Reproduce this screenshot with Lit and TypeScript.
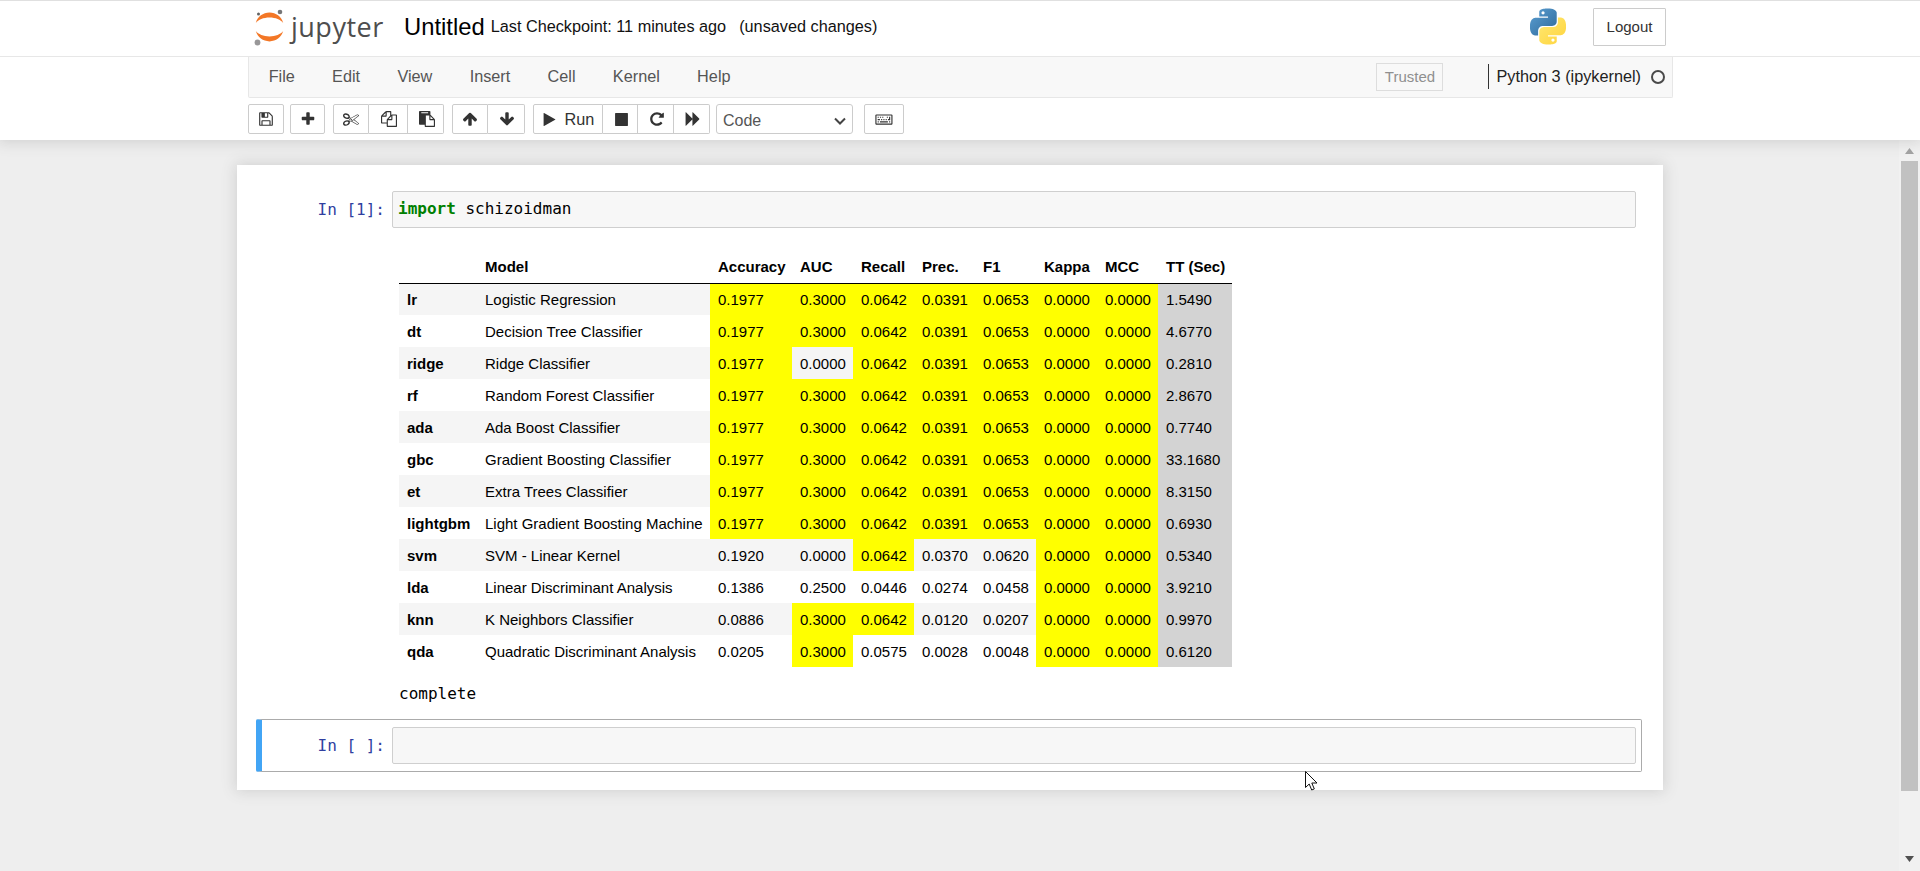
import { LitElement, html, css, svg } from "lit";
import { customElement } from "lit/decorators.js";

const P: Record<string, string> = {
  save: "M512 1536h768v-384h-768v384zm896 0h128v-896q0-14-10-38.5t-20-34.5l-281-281q-10-10-34-20t-39-10v416q0 40-28 68t-68 28h-576q-40 0-68-28t-28-68v-416h-128v1280h128v-416q0-40 28-68t68-28h832q40 0 68 28t28 68v416zm-384-928v-320q0-13-9.5-22.5t-22.5-9.5h-192q-13 0-22.5 9.5t-9.5 22.5v320q0 13 9.5 22.5t22.5 9.5h192q13 0 22.5-9.5t9.5-22.5zm640 32v928q0 40-28 68t-68 28h-1344q-40 0-68-28t-28-68v-1344q0-40 28-68t68-28h928q40 0 88 20t76 48l280 280q28 28 48 76t20 88z",
  plus: "M1600 736v192q0 40-28 68t-68 28h-416v416q0 40-28 68t-68 28h-192q-40 0-68-28t-28-68v-416h-416q-40 0-68-28t-28-68v-192q0-40 28-68t68-28h416v-416q0-40 28-68t68-28h192q40 0 68 28t28 68v416h416q40 0 68 28t28 68z",
  cut: "M960 896q26 0 45 19t19 45-19 45-45 19-45-19-19-45 19-45 45-19zm300 64l507 398q28 20 25 56-5 35-35 51l-128 64q-13 7-29 7-17 0-31-8l-690-387-110 66q-8 4-12 5 14 49 10 97-7 77-56 147.5t-132 123.5q-132 84-277 84-136 0-222-78-90-84-79-207 7-76 56-147t131-124q132-84 278-84 83 0 151 31 9-13 22-22l122-73-122-73q-13-9-22-22-68 31-151 31-146 0-278-84-82-53-131-124t-56-147q-5-59 15.5-113t63.5-93q85-79 222-79 145 0 277 84 83 52 132 123t56 148q4 48-10 97 4 1 12 5l110 66 690-387q14-8 31-8 16 0 29 7l128 64q30 16 35 51 3 36-25 56zm-681-260q46-42 21-108t-106-117q-92-59-192-59-74 0-113 36-46 42-21 108t106 117q92 59 192 59 74 0 113-36zm-85 745q81-51 106-117t-21-108q-39-36-113-36-100 0-192 59-81 51-106 117t21 108q39 36 113 36 100 0 192-59zm178-613l96 58v-11q0-36 33-56l14-8-79-47-26 26q-3 3-10 11t-12 12q-2 2-4 3.5t-3 2.5zm224 224l96 32 736-576-128-64-768 431v113l-160 96 9 8q2 2 7 6 4 4 11 12t11 12l26 26zm704 416l128-64-520-408-177 138q-2 3-13 7z",
  copy: "M1696 384q40 0 68 28t28 68v1216q0 40-28 68t-68 28h-960q-40 0-68-28t-28-68v-288h-544q-40 0-68-28t-28-68v-672q0-40 20-88t48-76l408-408q28-28 76-48t88-20h416q40 0 68 28t28 68v328q68-40 128-40h416zm-544 213l-299 299h299v-299zm-640-384l-299 299h299v-299zm196 647l316-316v-416h-384v416q0 40-28 68t-68 28h-416v640h512v-256q0-40 20-88t48-76zm956 804v-1152h-384v416q0 40-28 68t-68 28h-416v640h896z",
  paste: "M768 1664h896v-640h-416q-40 0-68-28t-28-68v-416h-384v1152zm256-1440v-64q0-13-9.5-22.5t-22.5-9.5h-704q-13 0-22.5 9.5t-9.5 22.5v64q0 13 9.5 22.5t22.5 9.5h704q13 0 22.5-9.5t9.5-22.5zm256 672h299l-299-299v299zm512 128v672q0 40-28 68t-68 28h-960q-40 0-68-28t-28-68v-160h-544q-40 0-68-28t-28-68v-1344q0-40 28-68t68-28h1088q40 0 68 28t28 68v328q21 13 36 28l408 408q28 28 48 76t20 88z",
  up: "M1675 971q0 51-37 90l-75 75q-38 38-91 38-54 0-90-38l-294-293v704q0 52-37.5 84.5t-90.5 32.5h-128q-53 0-90.5-32.5t-37.5-84.5v-704l-294 293q-36 38-90 38t-90-38l-75-75q-38-38-38-90 0-53 38-91l651-651q35-37 90-37 54 0 91 37l651 651q37 39 37 91z",
  down: "M1675 832q0 53-37 90l-651 652q-39 37-91 37-53 0-90-37l-651-652q-38-36-38-90 0-53 38-91l74-75q39-37 91-37 53 0 90 37l294 294v-704q0-52 38-90t90-38h128q52 0 90 38t38 90v704l294-294q37-37 90-37 52 0 91 37l75 75q37 39 37 91z",
  play: "M1576 927l-1328 738q-23 13-39.5 3t-16.5-36v-1472q0-26 16.5-36t39.5 3l1328 738q23 13 23 31t-23 31z",
  stop: "M1664 192v1408q0 26-19 45t-45 19h-1408q-26 0-45-19t-19-45v-1408q0-26 19-45t45-19h1408q26 0 45 19t19 45z",
  redo: "M1664 256v448q0 26-19 45t-45 19h-448q-42 0-59-40-17-39 14-69l138-138q-148-137-349-137-104 0-198.5 40.5t-163.5 109.5-109.5 163.5-40.5 198.5 40.5 198.5 109.5 163.5 163.5 109.5 198.5 40.5q119 0 225-52t179-147q7-10 23-12 15 0 25 9l137 138q9 8 9.5 20.5t-7.5 22.5q-109 132-264 204.5t-327 72.5q-156 0-298-61t-245-164-164-245-61-298 61-298 164-245 245-164 298-61q147 0 284.5 55.5t244.5 156.5l130-129q29-31 70-14 39 17 39 59z",
  ff: "M109 1651q-19 19-32 13t-13-32v-1472q0-26 13-32t32 13l710 710q9 9 13 19v-710q0-26 13-32t32 13l710 710q19 19 19 45t-19 45l-710 710q-19 19-32 13t-13-32v-710q-4 10-13 19z",
  kb: "M384 1168v96q0 16-16 16h-96q-16 0-16-16v-96q0-16 16-16h96q16 0 16 16zm128-256v96q0 16-16 16h-224q-16 0-16-16v-96q0-16 16-16h224q16 0 16 16zm-128-256v96q0 16-16 16h-96q-16 0-16-16v-96q0-16 16-16h96q16 0 16 16zm1024 512v96q0 16-16 16h-864q-16 0-16-16v-96q0-16 16-16h864q16 0 16 16zm-640-256v96q0 16-16 16h-96q-16 0-16-16v-96q0-16 16-16h96q16 0 16 16zm-128-256v96q0 16-16 16h-96q-16 0-16-16v-96q0-16 16-16h96q16 0 16 16zm384 256v96q0 16-16 16h-96q-16 0-16-16v-96q0-16 16-16h96q16 0 16 16zm-128-256v96q0 16-16 16h-96q-16 0-16-16v-96q0-16 16-16h96q16 0 16 16zm384 256v96q0 16-16 16h-96q-16 0-16-16v-96q0-16 16-16h96q16 0 16 16zm384 256v96q0 16-16 16h-96q-16 0-16-16v-96q0-16 16-16h96q16 0 16 16zm-256-512v96q0 16-16 16h-96q-16 0-16-16v-96q0-16 16-16h96q16 0 16 16zm256 0v352q0 16-16 16h-224q-16 0-16-16v-96q0-16 16-16h112v-240q0-16 16-16h96q16 0 16 16zm128 752v-896h-1664v896h1664zm128-896v896q0 53-37.5 90.5t-90.5 37.5h-1664q-53 0-90.5-37.5t-37.5-90.5v-896q0-53 37.5-90.5t90.5-37.5h1664q53 0 90.5 37.5t37.5 90.5z",
};

const ic = (n: string, vb = "0 0 1792 1792") =>
  html`<svg class="ic ic-${n}" viewBox=${vb} aria-hidden="true">${svg`<path fill="currentColor" d=${P[n]}></path>`}</svg>`;

type Row = [string, string, string, string, string, string, string, string, string, string];
const rows: Row[] = [
  ["lr", "Logistic Regression", "0.1977", "0.3000", "0.0642", "0.0391", "0.0653", "0.0000", "0.0000", "1.5490"],
  ["dt", "Decision Tree Classifier", "0.1977", "0.3000", "0.0642", "0.0391", "0.0653", "0.0000", "0.0000", "4.6770"],
  ["ridge", "Ridge Classifier", "0.1977", "0.0000", "0.0642", "0.0391", "0.0653", "0.0000", "0.0000", "0.2810"],
  ["rf", "Random Forest Classifier", "0.1977", "0.3000", "0.0642", "0.0391", "0.0653", "0.0000", "0.0000", "2.8670"],
  ["ada", "Ada Boost Classifier", "0.1977", "0.3000", "0.0642", "0.0391", "0.0653", "0.0000", "0.0000", "0.7740"],
  ["gbc", "Gradient Boosting Classifier", "0.1977", "0.3000", "0.0642", "0.0391", "0.0653", "0.0000", "0.0000", "33.1680"],
  ["et", "Extra Trees Classifier", "0.1977", "0.3000", "0.0642", "0.0391", "0.0653", "0.0000", "0.0000", "8.3150"],
  ["lightgbm", "Light Gradient Boosting Machine", "0.1977", "0.3000", "0.0642", "0.0391", "0.0653", "0.0000", "0.0000", "0.6930"],
  ["svm", "SVM - Linear Kernel", "0.1920", "0.0000", "0.0642", "0.0370", "0.0620", "0.0000", "0.0000", "0.5340"],
  ["lda", "Linear Discriminant Analysis", "0.1386", "0.2500", "0.0446", "0.0274", "0.0458", "0.0000", "0.0000", "3.9210"],
  ["knn", "K Neighbors Classifier", "0.0886", "0.3000", "0.0642", "0.0120", "0.0207", "0.0000", "0.0000", "0.9970"],
  ["qda", "Quadratic Discriminant Analysis", "0.0205", "0.3000", "0.0575", "0.0028", "0.0048", "0.0000", "0.0000", "0.6120"],
];
const heads = ["", "Model", "Accuracy", "AUC", "Recall", "Prec.", "F1", "Kappa", "MCC", "TT (Sec)"];
const best = ["", "", "0.1977", "0.3000", "0.0642", "0.0391", "0.0653", "0.0000", ""];

@customElement("app-root")
export class AppRoot extends LitElement {
  static styles = css`
    :host { display: flex; flex-direction: column; height: 871px; overflow: hidden; background: #eee; font-family: "Liberation Sans", Arial, sans-serif; color: #000; position: relative; }
    * { box-sizing: border-box; }
    header { height: 140px; flex: none; background: #fff; border-top: 1px solid #e0e0e0; box-shadow: 0 0 14px 2px rgba(87,87,87,.2); position: relative; z-index: 2; }
    .top { height: 56px; border-bottom: 1px solid #e7e7e7; display: flex; align-items: center; padding: 0 0 4px 253px; }
    .logo { width: 33px; height: 40px; flex: none; margin-top: 3px; }
    .jup { font-family: "Open Sans", sans-serif; font-size: 27px; color: #4e4e4e; margin-left: 5px; width: 113px; letter-spacing: .5px; line-height: 40px; }
    .title { font-size: 23.8px; margin-right: 6px; }
    .ck { font-size: 16.25px; color: #111; }
    .unsaved { margin-left: 13px; }
    .py { width: 36px; height: 37px; margin-left: auto; flex: none; }
    .logout { width: 73px; height: 38px; margin: 0 254px 0 27px; border: 1px solid #ccc; display: flex; align-items: center; justify-content: center; font-size: 15px; color: #333; border-radius: 1px; }
    .menu { margin-left: 248px; width: 1425px; height: 41px; background: #f8f8f8; border: 1px solid #e7e7e7; border-top: 0; border-radius: 0 0 2px 2px; display: flex; align-items: center; padding: 0 0 1px 1px; color: #555; font-size: 16.25px; }
    .menu span.m { padding: 0 18.65px; }
    .trusted { margin-left: auto; width: 67px; height: 28px; border: 1px solid #ddd; display: flex; align-items: center; justify-content: center; font-size: 15px; color: #8f8f8f; }
    .kernel { margin-left: 45px; height: 25px; border-left: 1px solid #333; padding-left: 7px; color: #222; line-height: 25px; font-size: 16.25px; white-space: nowrap; }
    .circle { width: 14px; height: 14px; border: 2px solid #4a4a4a; border-radius: 50%; margin: 1px 7px 0 10px; flex: none; }
    .bar { margin: 6px 0 0 248px; display: flex; height: 30px; }
    .grp { display: flex; margin-right: 8px; }
    .btn { height: 30px; border: 1px solid #ccc; border-left-width: 0; background: #fff; display: flex; align-items: center; justify-content: center; color: #333; font-size: 16.25px; gap: 8px; padding-left: 2px; }
    .btn:first-child { border-left-width: 1px; border-radius: 2px 0 0 2px; padding-left: 0; }
    .btn:last-child { border-radius: 0 2px 2px 0; }
    .btn:only-child { border-radius: 2px; }
    .w36 { width: 36px; } .w35 { width: 35px; } .w39 { width: 39px; } .w37 { width: 37px; } .w70 { width: 70px; } .w40 { width: 40px; }
    .mr-tight { margin-right: 6px; }
    .ic { width: 16px; height: 16px; display: block; }
    .ic-play { width: 15px; height: 15px; }
    .ic-stop { width: 15px; height: 15px; }
    .ic-kb { width: 19px; height: 16px; }
    .select { width: 137px; height: 30px; border: 1px solid #ccc; border-radius: 3px; background: #fff; display: flex; align-items: center; justify-content: space-between; padding: 3px 6px 0 6px; font-size: 16px; color: #555; margin-right: 11px; }
    .chev { width: 12px; height: 8px; display: block; }
    main { flex: 1; display: flex; min-height: 0; }
    .site { flex: 1; min-width: 0; }
    .nb { margin: 25px 0 0 237px; width: 1426px; height: 625px; background: #fff; box-shadow: 0 0 14px 1px rgba(87,87,87,.2); padding-top: 26px; position: relative; }
    .cell { display: flex; padding-right: 27px; }
    .prompt { width: 155px; padding-right: 7px; text-align: right; font: 16px/37px "DejaVu Sans Mono", monospace; color: #303f9f; flex: none; white-space: pre; }
    .input { flex: 1; height: 37px; background: #f7f7f7; border: 1px solid #cfcfcf; border-radius: 2px; padding-left: 5px; font: 16px/34px "DejaVu Sans Mono", monospace; white-space: pre; }
    .kw { color: #008000; font-weight: 700; }
    .out { margin-left: 162px; padding-top: 17px; }
    table { border-collapse: collapse; table-layout: fixed; width: 833px; font-size: 15px; }
    th, td { padding: 0 8px; height: 32px; text-align: left; white-space: nowrap; font-weight: 400; overflow: hidden; }
    thead th { font-weight: 700; height: 38px; border-bottom: 1px solid #000; padding-top: 6px; }
    tbody th { font-weight: 700; }
    tbody tr:nth-child(odd) { background: #f5f5f5; }
    td.y { background: #ff0; }
    td.g { background: #d3d3d3; }
    .text { margin-left: 162px; font: 16px/24px "DejaVu Sans Mono", monospace; padding-top: 15px; height: 52px; }
    .sel { margin-left: 19px; width: 1386px; height: 53px; border: 1px solid #ababab; border-left: 6px solid #42a5f5; border-radius: 2px; padding: 7px 5px 7px 0; }
    .sel .cell { padding-right: 0; }
    .sel .prompt { width: 130px; }
    .track { width: 21px; flex: none; background: #f1f1f1; display: flex; flex-direction: column; align-items: center; }
    .arr { height: 21px; flex: none; display: flex; align-items: center; justify-content: center; width: 100%; }
    .thumb { width: 17px; height: 630px; background: #c1c1c1; flex: none; }
    .arrsvg { width: 9px; height: 6px; display: block; }
    .grow { flex: 1; }
    .down { height: 24px; }
    .cursor { position: absolute; left: 1305px; top: 771px; width: 13px; height: 20px; z-index: 3; }
  `;

  render() {
    const cols = [78, 233, 82, 61, 61, 61, 61, 61, 61, 74];
    return html`
      <header>
        <div class="top">
          <svg class="logo" viewBox="0 0 33 40" aria-hidden="true">
            <path fill="#f37726" d="M16.5 9.5c-6 0-11.2 2.2-13.7 5.4C4.6 8.8 10 4.6 16.5 4.6s11.900 4.200 13.700 10.300C27.700 11.700 22.500 9.500 16.500 9.500z"/>
            <path fill="#f37726" d="M16.500 28.500c6 0 11.200-2.200 13.700-5.400-1.800 6.100-7.200 10.300-13.700 10.300S4.600 29.200 2.800 23.100c2.500 3.200 7.700 5.400 13.700 5.400z"/>
            <circle cx="27" cy="4" r="2.300" fill="#767677"/>
            <circle cx="4.500" cy="34.500" r="2.900" fill="#989798"/>
            <circle cx="5.500" cy="6" r="1.500" fill="#616262"/>
          </svg>
          <span class="jup">jupyter</span>
          <span class="title">Untitled</span>
          <span class="ck">Last Checkpoint: 11 minutes ago</span>
          <span class="ck unsaved">(unsaved changes)</span>
          <svg class="py" viewBox="0 0 24 24" aria-hidden="true">
            <defs>
              <linearGradient id="pb" x1="0" y1="0" x2="1" y2="1"><stop offset="0" stop-color="#5a9fd4"/><stop offset="1" stop-color="#306998"/></linearGradient>
              <linearGradient id="py" x1="0" y1="0" x2="1" y2="1"><stop offset="0" stop-color="#ffe873"/><stop offset="1" stop-color="#ffd43b"/></linearGradient>
            </defs>
            <path fill="url(#pb)" d="M14.25.18l.9.2.73.26.59.3.45.32.34.34.25.34.16.33.1.3.04.26.02.2-.01.13V8.5l-.05.63-.13.55-.21.46-.26.38-.3.31-.33.25-.35.19-.35.14-.33.1-.3.07-.26.04-.21.02H8.77l-.69.05-.59.14-.5.22-.41.27-.33.32-.27.35-.2.36-.15.37-.1.35-.07.32-.04.27-.02.21v3.06H3.17l-.21-.03-.28-.07-.32-.12-.35-.18-.36-.26-.36-.36-.35-.46-.32-.59-.28-.73-.21-.88-.14-1.05-.05-1.23.06-1.22.16-1.04.24-.87.32-.71.36-.57.4-.44.42-.33.42-.24.4-.16.36-.1.32-.05.24-.01h.16l.06.01h8.16v-.83H6.18l-.01-2.75-.02-.37.05-.34.11-.31.17-.28.25-.26.31-.23.38-.2.44-.18.51-.15.58-.12.64-.1.71-.06.77-.04.84-.02 1.27.05zm-6.3 1.98l-.23.33-.08.41.08.41.23.34.33.22.41.09.41-.09.33-.22.23-.34.08-.41-.08-.41-.23-.33-.33-.22-.41-.09-.41.09z"/>
            <path fill="url(#py)" d="M21.04 6.11l.28.06.32.12.35.18.36.27.36.35.35.47.32.59.28.73.21.88.14 1.04.05 1.23-.06 1.23-.16 1.04-.24.86-.32.71-.36.57-.4.45-.42.33-.42.24-.4.16-.36.09-.32.05-.24.02-.16-.01h-8.22v.82h5.84l.01 2.76.02.36-.05.34-.11.31-.17.29-.25.25-.31.24-.38.2-.44.17-.51.15-.58.13-.64.09-.71.07-.77.04-.84.01-1.27-.04-1.07-.14-.9-.2-.73-.25-.59-.3-.45-.33-.34-.34-.25-.34-.16-.33-.1-.3-.04-.25-.02-.2.01-.13v-5.34l.05-.64.13-.54.21-.46.26-.38.3-.32.33-.24.35-.2.35-.14.33-.1.3-.06.26-.04.21-.02.13-.01h5.84l.69-.05.59-.14.5-.21.41-.28.33-.32.27-.35.2-.36.15-.36.1-.35.07-.32.04-.28.02-.21V6.07h2.09l.14.01zm-6.47 14.25l-.23.33-.08.41.08.41.23.33.33.23.41.08.41-.08.33-.23.23-.33.08-.41-.08-.41-.23-.33-.33-.23-.41-.08-.41.08z"/>
          </svg>
          <div class="logout">Logout</div>
        </div>
        <div class="menu">
          ${["File", "Edit", "View", "Insert", "Cell", "Kernel", "Help"].map((m) => html`<span class="m">${m}</span>`)}
          <div class="trusted">Trusted</div>
          <div class="kernel">Python 3 (ipykernel)</div>
          <div class="circle"></div>
        </div>
        <div class="bar">
          <div class="grp mr-tight"><div class="btn w36">${ic("save")}</div></div>
          <div class="grp"><div class="btn w35">${ic("plus")}</div></div>
          <div class="grp"><div class="btn w36">${ic("cut")}</div><div class="btn w39">${ic("copy")}</div><div class="btn w36">${ic("paste")}</div></div>
          <div class="grp"><div class="btn w36">${ic("up")}</div><div class="btn w37">${ic("down")}</div></div>
          <div class="grp mr-tight"><div class="btn w70">${ic("play")}<span>Run</span></div><div class="btn w35">${ic("stop")}</div><div class="btn w36">${ic("redo")}</div><div class="btn w36">${ic("ff")}</div></div>
          <div class="select"><span>Code</span><svg class="chev" viewBox="0 0 12 8" aria-hidden="true"><path d="M1 1.500l5 5 5-5" fill="none" stroke="#444" stroke-width="2"/></svg></div>
          <div class="grp"><div class="btn w40">${ic("kb", "0 0 2048 1792")}</div></div>
        </div>
      </header>
      <main>
        <div class="site">
          <div class="nb">
            <div class="cell">
              <div class="prompt">In [1]:</div>
              <div class="input"><span class="kw">import</span> schizoidman</div>
            </div>
            <div class="out">
              <table>
                <colgroup>${cols.map((w) => html`<col width=${w} />`)}</colgroup>
                <thead><tr>${heads.map((h) => html`<th>${h}</th>`)}</tr></thead>
                <tbody>
                  ${rows.map((r) => html`<tr>
                    <th>${r[0]}</th>
                    <td>${r[1]}</td>
                    ${r.slice(2, 9).map((v, i) => html`<td class=${v === best[i + 2] || i >= 5 ? "y" : ""}>${v}</td>`)}
                    <td class="g">${r[9]}</td>
                  </tr>`)}
                </tbody>
              </table>
            </div>
            <div class="text">complete</div>
            <div class="sel">
              <div class="cell">
                <div class="prompt">In [ ]:</div>
                <div class="input"></div>
              </div>
            </div>
          </div>
        </div>
        <div class="track">
          <div class="arr"><svg class="arrsvg" viewBox="0 0 9 6" aria-hidden="true"><path d="M4.500 0L9 6H0z" fill="#a3a3a3"/></svg></div>
          <div class="thumb"></div>
          <div class="grow"></div>
          <div class="arr down"><svg class="arrsvg" viewBox="0 0 9 6" aria-hidden="true"><path d="M0 0h9L4.500 6z" fill="#505050"/></svg></div>
        </div>
      </main>
      <svg class="cursor" viewBox="0 0 13 20" aria-hidden="true"><path d="M.5.500v16l3.700-3.500 2.500 6 2.600-1.100-2.500-5.900H12z" fill="#fff" stroke="#111" stroke-width="1"/></svg>
    `;
  }
}
